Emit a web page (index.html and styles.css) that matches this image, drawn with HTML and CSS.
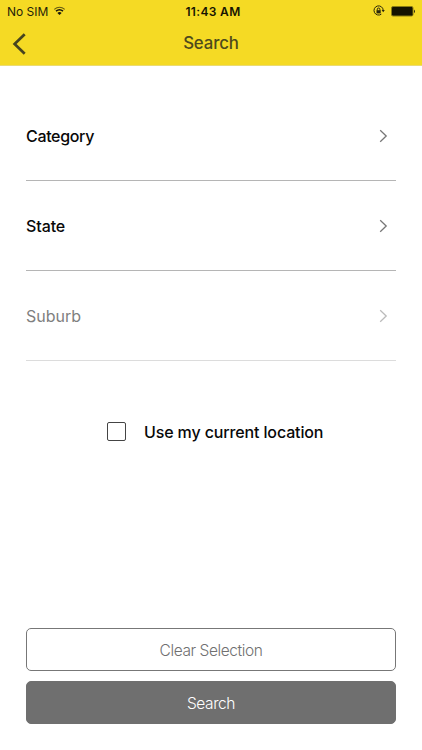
FILE: index.html
```html
<!DOCTYPE html>
<html lang="en">
<head>
<meta charset="utf-8">
<title>Search</title>
<link rel="stylesheet" href="styles.css">
</head>
<body>
<header class="top">
  <div class="status">
    <div class="carrier"><span>No SIM</span>
      <svg class="wifi" width="13" height="10" viewBox="0 0 12 10" fill="none" stroke="#17160b"><path d="M.8 3.4Q6-1 11.2 3.4" stroke-width="1.1" opacity=".65"/><path d="M2.5 5.2Q6 2.3 9.5 5.2" stroke-width="1.5"/><path d="M6 9 3.9 6.9Q6 5.3 8.1 6.9Z" fill="#17160b" stroke="none"/></svg>
    </div>
    <time class="clock">11:43 AM</time>
    <div class="power">
      <svg width="12" height="12" viewBox="0 0 12 12" fill="none" stroke="#29260b"><path d="M10.2 5.2A4.6 4.6 0 1 0 8.3 9.2"/><path d="m8.6 5.1 3.2 0-1.6 2.2Z" fill="#29260b" stroke="none"/><path d="M4.3 5.5V4.3a1.3 1.3 0 0 1 2.6 0v1.2"/><path d="M3.5 5.2h4.2v3.2H3.5Z" fill="#29260b" stroke="none"/></svg>
      <svg width="25" height="11" viewBox="0 0 25 11"><rect x=".5" y=".5" width="21.5" height="9.5" rx="1.5" fill="#151300" stroke="#8b7d12"/><path d="M23 3.5q2 1.8 0 3.7Z" fill="#29260b"/></svg>
    </div>
  </div>
  <div class="nav">
    <svg class="back" width="15" height="22" viewBox="0 0 15 22" fill="none" stroke="#47441f" stroke-width="2.7"><path d="M12.7 1.2 2.6 11l10.1 9.8"/></svg>
    <h1 class="title">Search</h1>
  </div>
</header>
<main class="content">
  <div class="row"><span class="category">Category</span><svg class="chevron" width="9" height="14" viewBox="0 0 9 14"><path d="m1.2 1.2 6 5.8-6 5.8"/></svg></div>
  <div class="row"><span class="state">State</span><svg class="chevron" width="9" height="14" viewBox="0 0 9 14"><path d="m1.2 1.2 6 5.8-6 5.8"/></svg></div>
  <div class="row disabled"><span class="suburb">Suburb</span><svg class="chevron" width="9" height="14" viewBox="0 0 9 14"><path d="m1.2 1.2 6 5.8-6 5.8"/></svg></div>
  <div class="location"><span class="checkbox"></span><span class="location-text">Use my current location</span></div>
  <div class="actions">
    <button class="button clear"><span>Clear Selection</span></button>
    <button class="button search"><span>Search</span></button>
  </div>
</main>
</body>
</html>
```
FILE: styles.css
```css
* { box-sizing: border-box; }
body { margin: 0; height: 750px; display: flex; flex-direction: column; background: #fff; color: #080808; font-family: Inter, "Liberation Sans", sans-serif; font-size: 16px; overflow: hidden; }
svg { display: block; flex: none; }
.top { height: 66px; background: #f5da24; border-bottom: 1px solid #eadb73; }
.status { height: 22px; display: grid; grid-template-columns: 1fr auto 1fr; align-items: center; padding: 0 6px 0 7px; font-size: 12px; }
.carrier { display: flex; align-items: center; gap: 5px; color: #252309; }
.clock { font-size: 12px; font-weight: 600; color: #171502; letter-spacing: .35px; margin-left: 3px; }
.power { display: flex; justify-content: flex-end; align-items: center; gap: 6px; }
.nav { height: 43px; display: grid; grid-template-columns: 1fr auto 1fr; align-items: center; padding: 0 12px; }
.title { margin: -1px 0 0; font-size: 16.8px; font-weight: 550; color: #4e4a1c; letter-spacing: -.1px; }
.content { flex: 1; display: flex; flex-direction: column; padding: 25px 26px 26px; }
.row { height: 90px; flex: none; display: flex; justify-content: space-between; align-items: center; padding: 0 8px 0 0; border-bottom: 1px solid #b5b5b5; font-weight: 500; }
.category { letter-spacing: -.33px; }
.state { letter-spacing: -.1px; }
.chevron { fill: none; stroke: #777; stroke-width: 1.3; }
.disabled { color: #7f7f7f; border-color: #dcdcdc; font-weight: 400; }
.disabled .chevron { stroke: #bbb; }
.location { display: flex; align-items: center; height: 20px; margin: 61px 0 0 81px; font-weight: 500; white-space: nowrap; letter-spacing: -.13px; }
.checkbox { width: 19px; height: 19px; margin: -1px 18px 0 0; border: 1.5px solid #444; border-radius: 2px; }
.actions { margin-top: auto; display: flex; flex-direction: column; gap: 10px; }
.button { height: 43px; padding: 2px 0 0; border: 1px solid #777; border-radius: 5px; font: 350 15.5px Inter, "Liberation Sans", sans-serif; letter-spacing: -.42px; }
.clear { background: #fff; color: #707070; }
.search { background: #6f6f6f; border-color: #6f6f6f; color: #fff; }
```
